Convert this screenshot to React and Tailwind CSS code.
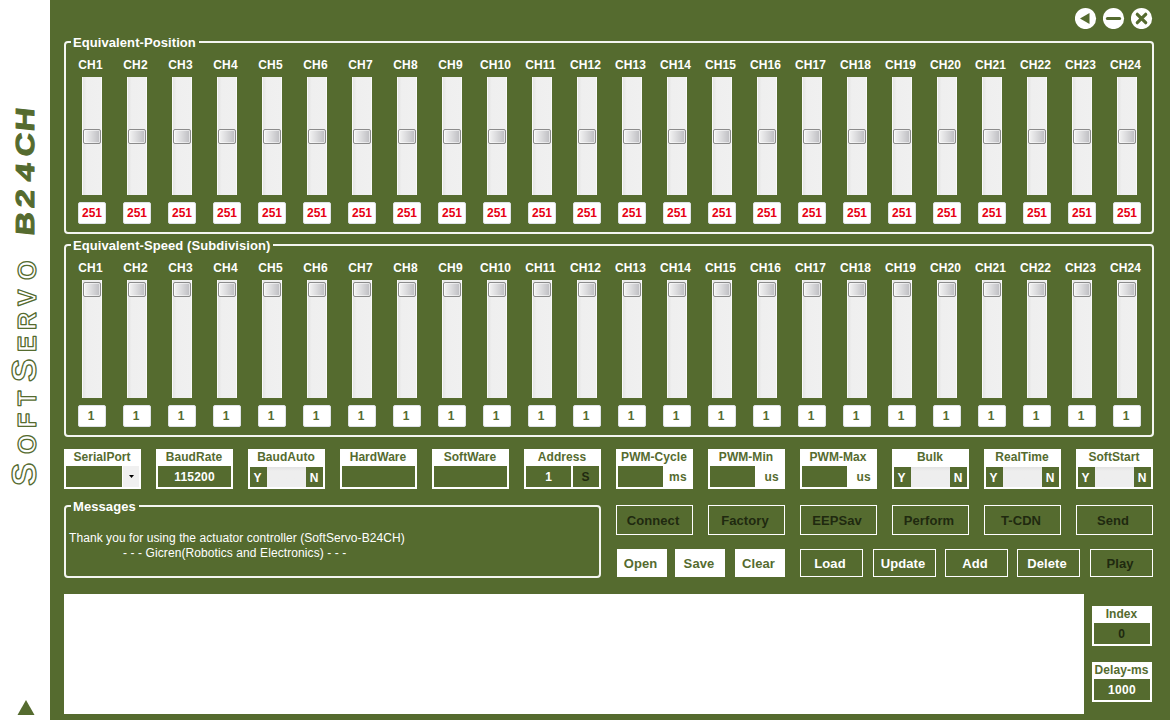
import React from "react";

const channels = Array.from({ length: 24 }, (_, i) => `CH${i + 1}`);

function Group({ title, className, children }) {
  return (
    <section className={`relative rounded-[4px] border-2 border-[#f4f6f1] ${className}`}>
      <h2 className="absolute -top-[9px] left-[5px] bg-[#556b2f] pr-[3px] pl-[2px] text-[13px] leading-[18px] font-bold whitespace-nowrap tracking-[0.08px]">
        {title}
      </h2>
      {children}
    </section>
  );
}

function Channel({ name, value, thumb, valueClass }) {
  return (
    <div className="flex w-[45px] flex-col items-center">
      <span className="mr-[3px] h-4 scale-y-[1.1] text-[12px] leading-[17px] font-bold tracking-[0.1px]">{name}</span>
      <div
        className={`mt-[4px] h-[118px] w-5 border-x border-x-[#fafafa] bg-linear-to-r from-[#e4e4e4] from-0% via-[#efefef] via-20% to-[#f0f0f0] ${thumb}`}
      >
        <div className="h-[15px] w-[18px] rounded-[2px] border border-[#8b8b8b] bg-linear-to-r from-[#f4f4f4] from-0% via-[#dcdcde] via-45% to-[#bdbdc1] shadow-[inset_0_0_0_1px_#ffffff90]" />
      </div>
      <div
        className={`mt-[7px] h-[22px] w-7 rounded-[2px] border border-[#dfe3e8] bg-white text-center text-[12px] leading-[21px] font-bold ${valueClass}`}
      >
        <span className="inline-block scale-y-[1.1]">{value}</span>
      </div>
    </div>
  );
}

function Field({ label, className = "w-[77px]", children }) {
  return (
    <div className={`flex h-10 flex-col bg-white px-[2px] pb-[2px] ${className}`}>
      <span className="h-[17px] pr-px text-center text-[12px] leading-[16px] font-bold whitespace-nowrap tracking-[0.05px] text-[#556b2f]">
        {label}
      </span>
      <div className="flex h-[21px] text-[12px] leading-[22px] font-bold">{children}</div>
    </div>
  );
}

function Toggle({ label }) {
  return (
    <Field label={label}>
      <div className="mt-px flex h-5 flex-1 text-center leading-[22px]">
        <span className="w-[17px] bg-[#556b2f] pr-[2px]">Y</span>
        <span className="flex-1 bg-linear-to-b from-[#e2e2e2] to-[#eeeeee] to-20%" />
        <span className="w-[17px] bg-[#556b2f] pr-px">N</span>
      </div>
    </Field>
  );
}

function Unit({ label, unit }) {
  return (
    <Field label={label}>
      <span className="w-[45px] bg-[#556b2f]" />
      <span className="flex-1 pr-1 text-right tracking-[0.3px] text-[#556b2f]">{unit}</span>
    </Field>
  );
}

function Button({ children, className }) {
  return (
    <button
      className={`flex items-center justify-center border border-white pt-[2px] text-[13px] leading-[16px] font-bold tracking-[0.1px] ${className}`}
    >
      {children}
    </button>
  );
}

function Sidebar() {
  return (
    <aside className="h-[720px] w-[50px] shrink-0 bg-white">
      <svg width="50" height="720" viewBox="0 0 50 720" fill="#556b2f">
        <g transform="translate(35.5 486) rotate(-90)">
          <text
            className="[font-variant:small-caps]"
            x="0 32 58 80 104 134 156 180 206"
            y="0"
            fontSize="35"
            fontWeight="700"
            fill="#fff"
            stroke="#556b2f"
            strokeWidth="1.3"
            strokeLinejoin="bevel"
          >
            SoftServo
          </text>
        </g>
        <g transform="translate(34 234) rotate(-90) skewX(-6) scale(1.25 1)">
          <text
            x="-1.8 20.5 41.7 61.4 81.6"
            y="0"
            fontSize="26"
            fontWeight="700"
            stroke="#556b2f"
            strokeWidth="1"
          >
            B24CH
          </text>
        </g>
        <path d="M26 700 L34.5 715 H17.5 Z" />
      </svg>
    </aside>
  );
}

function WindowButtons() {
  return (
    <div className="flex h-[41px] justify-end gap-[6px] pt-[7px] pr-[17px]">
      <svg width="22" height="22" viewBox="0 0 22 22">
        <circle cx="10.5" cy="11.5" r="10.6" fill="#fff" />
        <path d="M5 11.5 L14.5 6 V17 Z" fill="#556b2f" />
      </svg>
      <svg width="22" height="22" viewBox="0 0 22 22">
        <circle cx="10.5" cy="11.5" r="10.6" fill="#fff" />
        <path d="M4.4 11.5 H16.6" stroke="#556b2f" strokeWidth="3" strokeLinecap="round" />
      </svg>
      <svg width="22" height="22" viewBox="0 0 22 22">
        <circle cx="10.5" cy="11.5" r="10.6" fill="#fff" />
        <path d="M6.3 7.3 L14.7 15.7 M14.7 7.3 L6.3 15.7" stroke="#556b2f" strokeWidth="3.2" strokeLinecap="round" />
      </svg>
    </div>
  );
}

export default function App() {
  return (
    <div className="flex h-[720px] w-[1170px] overflow-hidden bg-[#556b2f] font-['Liberation_Sans',Arial,sans-serif] text-white">
      <Sidebar />
      <main className="w-[1120px] pl-[14px]">
        <WindowButtons />

        <Group title="Equivalent-Position" className="h-[193px] w-[1090px]">
          <div className="flex pt-[14px] pl-[3.5px]">
            {channels.map((c) => (
              <Channel key={c} name={c} value="251" thumb="pt-[52px]" valueClass="text-[#e60012]" />
            ))}
          </div>
        </Group>

        <Group title="Equivalent-Speed (Subdivision)" className="mt-[10px] h-[193px] w-[1090px]">
          <div className="flex pt-[14px] pl-[3.5px]">
            {channels.map((c) => (
              <Channel key={c} name={c} value="1" thumb="pt-[2px]" valueClass="pr-[2px] text-[#556b2f]" />
            ))}
          </div>
        </Group>

        <div className="mt-[12px] flex gap-[15px]">
          <Field label="SerialPort">
            <span className="w-[56px] bg-[#556b2f]" />
            <span className="ml-px flex flex-1 items-center justify-center bg-[#f0f0f0]">
              <svg width="5" height="3" viewBox="0 0 5 3">
                <path d="M0 0 H5 L2.5 3 Z" fill="#000" />
              </svg>
            </span>
          </Field>
          <Field label="BaudRate">
            <span className="flex-1 bg-[#556b2f] text-center tracking-[0.2px]">115200</span>
          </Field>
          <Toggle label="BaudAuto" />
          <Field label="HardWare">
            <span className="flex-1 bg-[#556b2f]" />
          </Field>
          <Field label="SoftWare">
            <span className="flex-1 bg-[#556b2f]" />
          </Field>
          <Field label="Address">
            <span className="w-[45px] bg-[#556b2f] text-center">1</span>
            <span className="ml-[2px] flex-1 bg-[#556b2f] pr-px text-center text-[#20290f]">S</span>
          </Field>
          <Unit label="PWM-Cycle" unit="ms" />
          <Unit label="PWM-Min" unit="us" />
          <Unit label="PWM-Max" unit="us" />
          <Toggle label="Bulk" />
          <Toggle label="RealTime" />
          <Toggle label="SoftStart" />
        </div>

        <div className="mt-4 flex">
          <Group title="Messages" className="h-[73px] w-[537px]">
            <p className="pt-[24px] pl-[3px] text-[12px] leading-[15px] whitespace-pre tracking-[0.07px]">
              Thank you for using the actuator controller (SoftServo-B24CH)
            </p>
            <p className="pl-[57px] text-[12px] leading-[15px] whitespace-pre tracking-[0.09px]">
              - - - Gicren(Robotics and Electronics) - - -
            </p>
          </Group>
          <div className="ml-[15px]">
            <div className="flex gap-[15px]">
              {["Connect", "Factory", "EEPSav", "Perform", "T-CDN", "Send"].map((b) => (
                <Button key={b} className="h-[30px] w-[77px] pr-[3px] text-[#20290f]">
                  {b}
                </Button>
              ))}
            </div>
            <div className="mt-[14px] flex">
              <Button className="ml-px h-7 w-[50px] bg-white pr-[3px] text-[#556b2f]">Open</Button>
              <Button className="ml-[8px] h-7 w-[50px] bg-white pr-[2px] text-[#556b2f]">Save</Button>
              <Button className="ml-[10px] h-7 w-[50px] bg-white pr-[3px] text-[#556b2f]">Clear</Button>
              <Button className="ml-[15px] h-7 w-[63px] pr-[3px]">Load</Button>
              <Button className="ml-[10px] h-7 w-[63px] pr-[3px]">Update</Button>
              <Button className="ml-[9px] h-7 w-[63px] pr-[3px]">Add</Button>
              <Button className="ml-[9px] h-7 w-[63px] pr-[3px]">Delete</Button>
              <Button className="ml-[10px] h-7 w-[63px] pr-[3px] text-[#20290f]">Play</Button>
            </div>
          </div>
        </div>

        <div className="mt-4 flex">
          <div className="h-[120px] w-[1020px] bg-white" />
          <div className="ml-2 flex flex-col gap-4 pt-3">
            <Field label="Index" className="w-[60px]">
              <span className="flex-1 bg-[#556b2f] pr-px text-center text-[#20290f]">0</span>
            </Field>
            <Field label="Delay-ms" className="w-[60px]">
              <span className="flex-1 bg-[#556b2f] text-center tracking-[0.3px]">1000</span>
            </Field>
          </div>
        </div>
      </main>
    </div>
  );
}
